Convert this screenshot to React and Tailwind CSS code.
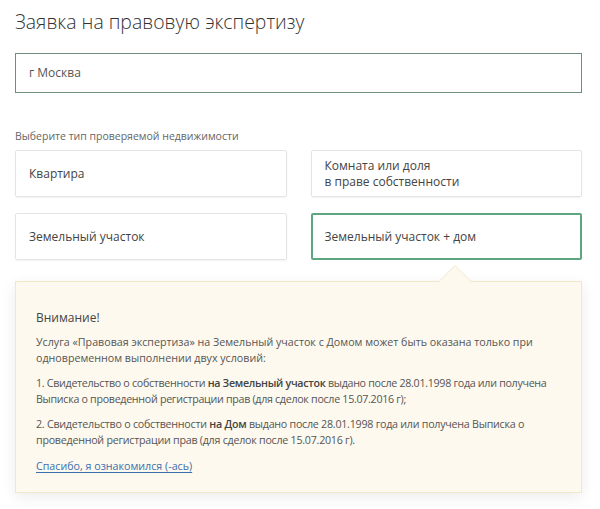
import React from "react";

const cards = [
  { id: "flat", label: ["Квартира"] },
  { id: "room", label: ["Комната или доля", "в праве собственности"] },
  { id: "land", label: ["Земельный участок"] },
  { id: "house", label: ["Земельный участок + дом"] },
];

export default function App() {
  const selected = "house";

  return (
    <div
      className="w-[600px] h-[509px] bg-white px-[15px] pt-[9px] text-[#333]"
      style={{ fontFamily: "'Open Sans', 'Noto Sans', sans-serif" }}
    >
      <h1 className="text-[19.4px] leading-[26px] font-light text-[#333]">
        Заявка на правовую экспертизу
      </h1>

      <div className="mt-[18px] w-[567px] h-[40px] border border-[#6f8f7c] flex items-center px-[13px] text-[12px] text-[#555]">
        г Москва
      </div>

      <p className="mt-[36px] text-[10.5px] leading-[14px] text-[#666]">
        Выберите тип проверяемой недвижимости
      </p>

      <div className="mt-[7px] grid grid-cols-2 gap-x-[24px] gap-y-[16px] w-[567px]">
        {cards.map((c) => (
          <div
            key={c.id}
            className={
              c.id === selected
                ? "h-[47px] border-2 border-[#5ea67f] flex flex-col justify-center px-[12px] text-[12px] leading-[16px] text-[#444] rounded-[2px]"
                : "h-[47px] border border-[#e4e4e4] shadow-[0_1px_2px_rgba(0,0,0,0.05)] flex flex-col justify-center px-[13px] text-[12px] leading-[16px] text-[#444] rounded-[2px]"
            }
          >
            {c.label.map((l) => (
              <span key={l}>{l}</span>
            ))}
          </div>
        ))}
      </div>

      <div className="relative mt-[21px] w-[567px] bg-[#fdf9ee] border border-[#f2e7c9] shadow-[0_4px_14px_rgba(0,0,0,0.08)] pl-[20px] pr-[16px] pt-[27px] pb-[18px] text-[10.7px] leading-[16px] text-[#555]">
        <svg
          className="absolute -top-[17px] left-[422px]"
          width="34"
          height="18"
          viewBox="0 0 34 18"
        >
          <path d="M0 17.5 L17 0.5 L34 17.5" fill="#fdf9ee" stroke="#f2e7c9" strokeWidth="1" />
          <rect x="1" y="17" width="32" height="2" fill="#fdf9ee" />
        </svg>
        <div className="text-[12px] leading-[18px] text-[#444] mb-[7px]">Внимание!</div>
        <p>
          Услуга «Правовая экспертиза» на Земельный участок с Домом может быть оказана только при
          <br />
          одновременном выполнении двух условий:
        </p>
        <p className="mt-[9px] tracking-[-0.3px] whitespace-nowrap">
          1. Свидетельство о собственности <b className="font-semibold text-[#444]">на Земельный участок</b> выдано
          после 28.01.1998 года или получена
          <br />
          Выписка о проведенной регистрации прав (для сделок после 15.07.2016 г);
        </p>
        <p className="mt-[9px] tracking-[-0.25px] whitespace-nowrap">
          2. Свидетельство о собственности <b className="font-semibold text-[#444]">на Дом</b> выдано после
          28.01.1998 года или получена Выписка о
          <br />
          проведенной регистрации прав (для сделок после 15.07.2016 г).
        </p>
        <a href="#" className="block mt-[10px] w-fit text-[#3b6fb0] underline underline-offset-2">
          Спасибо, я ознакомился (-ась)
        </a>
      </div>
    </div>
  );
}
